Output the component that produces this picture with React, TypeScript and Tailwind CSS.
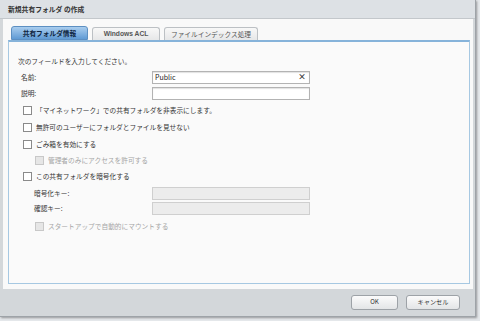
import React from "react";

const font = { fontFamily: '"Noto Sans CJK JP", "Noto Sans", sans-serif' };

function Check({ disabled, label, indent, h }: { disabled?: boolean; label: string; indent?: boolean; h: string }) {
  return (
    <div className={`flex items-center ${h} ${indent ? "pl-[26px]" : "pl-[14px]"}`}>
      <div
        className={`w-[9px] h-[9px] border ${disabled ? "border-[#c8c8c8] bg-[#e6e6e6]" : "border-[#8a8a8a] bg-white"}`}
      />
      <span className={`ml-[4px] text-[6.7px] leading-none ${disabled ? "text-[#a5a5a5]" : "text-[#333]"}`}>{label}</span>
    </div>
  );
}

function Field({ label, value, disabled, clear, indent, h }: { label: string; value?: string; disabled?: boolean; clear?: boolean; indent?: boolean; h: string }) {
  return (
    <div className={`flex items-center ${h}`}>
      <span className={`text-[6.7px] leading-none text-[#333] ${indent ? "w-[143px] pl-[25px]" : "w-[143px] pl-[12px]"}`}>{label}</span>
      <div
        className={`w-[158px] h-[13px] border flex items-center px-[2px] ${disabled ? "border-[#cfcfcf] bg-[#ececec]" : "border-[#b3b3b3] bg-white shadow-[inset_0_1px_1px_rgba(0,0,0,0.12)]"}`}
      >
        <span className="text-[7px] leading-none text-[#222] flex-1">{value}</span>
        {clear && <span className="text-[8px] leading-none text-[#333] font-bold mr-[1px]">×</span>}
      </div>
    </div>
  );
}

export default function App() {
  return (
    <div className="w-[480px] h-[321px] bg-[#e4e7ea] overflow-hidden relative" style={font}>
      <div className="w-[476px] h-[317px] flex flex-col bg-[#d3d7da] border-r border-b border-[#9ea3a8] shadow-[1px_1px_2px_rgba(0,0,0,0.35)]">
        {/* title bar */}
        <div className="h-[19px] shrink-0 bg-[#dde1e5] border-b border-[#c3c7cb] flex items-center pl-[8px]">
          <span className="text-[6.8px] font-bold text-[#333] leading-none">新規共有フォルダ の作成</span>
        </div>
        {/* body */}
        <div className="flex-1 ml-[3px] mr-[2px] bg-[#f9f9f9] flex flex-col pt-[7px] pb-[5px] pl-[5px] pr-[3px]">
          <div className="flex items-end h-[14px] pl-[3px] gap-[4px]">
            <div className="w-[77px] h-[14px] rounded-t-[3px] border border-[#5c8fc2] bg-gradient-to-b from-[#a9cdee] to-[#5f9ad4] flex items-center justify-center">
              <span className="text-[6.7px] font-bold text-[#0f2540] leading-none">共有フォルダ情報</span>
            </div>
            <div className="w-[68px] h-[13px] rounded-t-[3px] border border-b-0 border-[#bcc0c4] bg-gradient-to-b from-[#f8f8f8] to-[#e6e7e8] flex items-center justify-center">
              <span className="text-[6.7px] font-bold text-[#555] leading-none" style={{ fontFamily: '"Liberation Sans", sans-serif' }}>Windows ACL</span>
            </div>
            <div className="w-[94px] h-[13px] rounded-t-[3px] border border-b-0 border-[#bcc0c4] bg-gradient-to-b from-[#f8f8f8] to-[#e6e7e8] flex items-center justify-center">
              <span className="text-[6.7px] text-[#555] leading-none">ファイルインデックス処理</span>
            </div>
          </div>
          <div className="flex-1 border border-[#a6c8e2] border-t-2 border-t-[#86b3da] bg-[#fafafa] flex flex-col pt-[11px]">
            <div className="pl-[9px] h-[16px] flex items-center">
              <span className="text-[6.7px] leading-none text-[#333]">次のフィールドを入力してください。</span>
            </div>
            <Field h="h-[16px]" label="名前:" value="Public" clear />
            <Field h="h-[16px]" label="説明:" />
            <Check h="h-[18px] pt-[1px]" label="「マイネットワーク」での共有フォルダを非表示にします。" />
            <Check h="h-[17px]" label="無許可のユーザーにフォルダとファイルを見せない" />
            <Check h="h-[16px]" label="ごみ箱を有効にする" />
            <Check h="h-[16px]" label="管理者のみにアクセスを許可する" disabled indent />
            <Check h="h-[17px]" label="この共有フォルダを暗号化する" />
            <Field h="h-[16px]" label="暗号化キー:" disabled indent />
            <Field h="h-[15px]" label="確認キー:" disabled indent />
            <Check h="h-[20px]" label="スタートアップで自動的にマウントする" disabled indent />
          </div>
        </div>
        {/* footer */}
        <div className="h-[27px] shrink-0 flex items-center justify-end pr-[15px] gap-[8px]">
          <div className="w-[47px] h-[15px] rounded-[3px] border border-[#9da2a7] bg-gradient-to-b from-[#fbfbfb] to-[#e3e5e7] flex items-center justify-center">
            <span className="text-[6.2px] text-[#333] leading-none">OK</span>
          </div>
          <div className="w-[54px] h-[15px] rounded-[3px] border border-[#9da2a7] bg-gradient-to-b from-[#fbfbfb] to-[#e3e5e7] flex items-center justify-center">
            <span className="text-[6.2px] text-[#333] leading-none">キャンセル</span>
          </div>
        </div>
      </div>
    </div>
  );
}
